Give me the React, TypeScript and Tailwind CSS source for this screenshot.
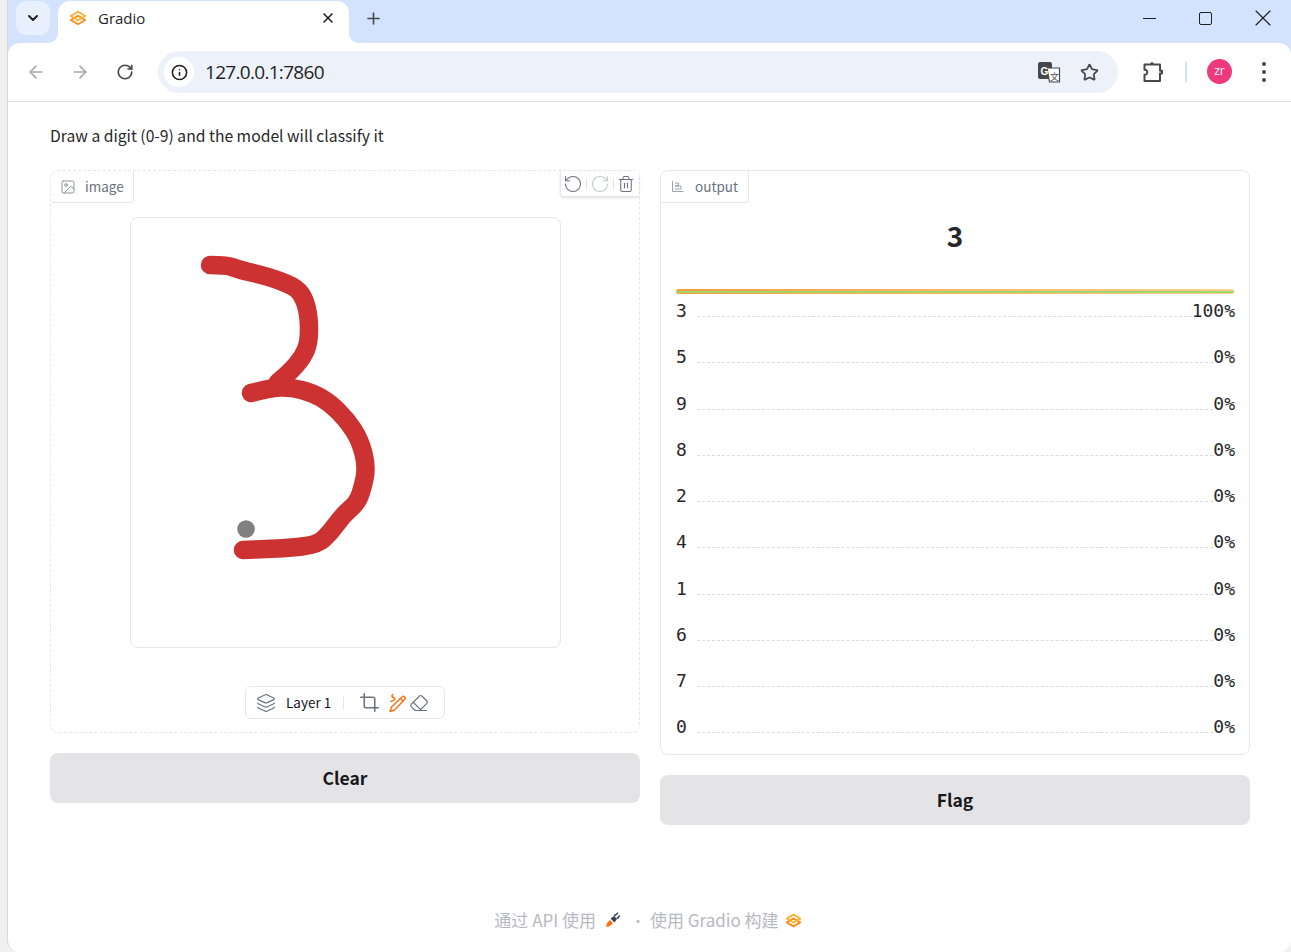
import { ArrowLeft, ArrowRight, ChevronDown, Crop, Eraser, Image, Info, Layers, Plus, RotateCcw, RotateCw, Star, Trash2, X } from "lucide-react";

const sans = "font-['Noto_Sans_CJK_SC','Noto_Sans',sans-serif]";

const scores = [
  { label: "3", value: "100%" },
  { label: "5", value: "0%" },
  { label: "9", value: "0%" },
  { label: "8", value: "0%" },
  { label: "2", value: "0%" },
  { label: "4", value: "0%" },
  { label: "1", value: "0%" },
  { label: "6", value: "0%" },
  { label: "7", value: "0%" },
  { label: "0", value: "0%" },
];

const upperStroke: [number, number][] = [
  [210, 265], [227, 265], [240, 270], [262, 275], [278, 280], [297, 288], [305, 300], [309, 318], [309, 342], [303, 357], [290, 372], [278, 382],
];
const lowerStroke: [number, number][] = [
  [251, 393], [270, 388], [290, 387], [313, 393], [330, 403], [347, 420], [360, 440], [367, 467], [362, 490], [357, 503], [343, 515], [330, 533], [317, 545], [287, 548], [267, 549], [243, 550],
];

// rounds the hand drawn strokes off through the midpoints
function smooth(points: [number, number][]) {
  let d = `M${points[0][0]} ${points[0][1]}`;
  for (let i = 1; i < points.length - 1; i++) {
    const [x, y] = points[i];
    const [nx, ny] = points[i + 1];
    d += ` Q${x} ${y} ${(x + nx) / 2} ${(y + ny) / 2}`;
  }
  const last = points[points.length - 1];
  return `${d} L${last[0]} ${last[1]}`;
}

function GradioLogo({ size = 18 }: { size?: number }) {
  return (
    <svg width={size} height={size} viewBox="0 0 18 18" fill="none" strokeWidth="1.900" strokeLinejoin="round">
      <path d="M1.800 11 9 15.200 16.200 11 9 6.800Z" stroke="#fb8c1e" />
      <path d="M1.800 7 9 2.800 16.200 7 9 11.200Z" stroke="#ffb02e" />
    </svg>
  );
}

function TranslateIcon() {
  return (
    <svg width="24" height="24" viewBox="0 0 24 24">
      <rect x="1" y="2" width="14" height="17" rx="2" fill="#46484b" />
      <path d="M10 8h12.500v14H12.500z" fill="#fff" stroke="#46484b" strokeWidth="1.200" />
      <text x="3.500" y="14.500" fontSize="10" fontWeight="700" fill="#fff" fontFamily="Liberation Sans">G</text>
      <text x="13" y="19.500" fontSize="9" fill="#46484b" fontFamily="Noto Sans CJK SC">文</text>
    </svg>
  );
}

function PuzzleIcon() {
  return (
    <svg width="24" height="24" viewBox="0 0 24 24" fill="none" stroke="#46484b" strokeWidth="2" strokeLinejoin="round">
      <path d="M4.500 4.500h15.500v6.200h2v2.800h-2V21H4.500v-6.200c1.800.2 2.700-1 2.700-2.600S6.300 9.500 4.500 9.700z" />
      <circle cx="12" cy="3.500" r="1.500" fill="#46484b" stroke="none" />
    </svg>
  );
}

function BrushIcon() {
  return (
    <svg width="20" height="20" viewBox="0 0 20 20" fill="none" stroke="#f97316" strokeWidth="1.500" strokeLinecap="round" strokeLinejoin="round">
      <path d="M2 18.500 3.500 14 14.500 3.500c1-1 3.500 1 2.500 2.500L6.500 17z" />
      <path d="M12.500 5.500 15 8" />
      <path d="M3 8.500C7 7 8 5.500 5.500 4.500 4 4 3 3 5 1.500" />
    </svg>
  );
}

function RocketIcon() {
  return (
    <svg width="16" height="16" viewBox="0 0 16 16">
      <path d="M1.500 15c-.5-2 .3-4 1.800-5.300L5 8l3 3-1.700 1.800C5 14.300 3.500 15 1.500 15z" fill="#f97316" />
      <path d="M5.500 6.500 9 4l3 3-2.500 3.500z" fill="#374151" />
      <path d="M9.500 2 11 4 8.800 4.500zM14 6l-2 1.300L11.600 5z" fill="#374151" />
      <path d="M10 3.500 13 .8M12.500 6 15 3.500" stroke="#374151" strokeWidth="1.500" />
    </svg>
  );
}

function TabFlare({ side }: { side: "left" | "right" }) {
  return (
    <svg
      width="10"
      height="10"
      viewBox="0 0 10 10"
      className={side === "left" ? "absolute bottom-0 -left-[10px]" : "absolute bottom-0 -right-[10px] -scale-x-100"}
    >
      <path d="M10 0v10H0c5.500 0 10-4.500 10-10z" fill="#fff" />
    </svg>
  );
}

function BrowserChrome() {
  return (
    <div className="flex flex-col bg-[#d3e3fd]">
      <div className="flex h-[43px] items-start">
        <div className="mt-[1px] ml-[8px] flex h-[34px] w-[34px] items-center justify-center rounded-[10px] bg-[#e9f0fd]">
          <ChevronDown size={16} strokeWidth={3} className="text-[#1f1f1f]" />
        </div>
        <div className="relative z-10 mt-[1px] ml-[8px] flex h-[42px] w-[291px] items-center rounded-t-[12px] bg-white pl-[11px] pr-[13px] pb-[8px]">
          <TabFlare side="left" />
          <TabFlare side="right" />
          <GradioLogo />
          <span className="ml-[11px] flex-1 text-[15px] text-[#1f1f1f] font-['Open_Sans',sans-serif]">Gradio</span>
          <X size={16} strokeWidth={2.500} className="text-[#1f1f1f]" />
        </div>
        <div className="ml-[15px] mt-[9px]">
          <Plus size={19} strokeWidth={2} className="text-[#46484b]" />
        </div>
        <div className="ml-auto flex h-[36px] items-center">
          <div className="h-[1px] w-[13px] bg-[#1f1f1f]" />
          <div className="ml-[43px] h-[13px] w-[13px] rounded-[2px] border border-[#1f1f1f]" />
          <X size={28} strokeWidth={1} className="ml-[37px] mr-[14px] text-[#1f1f1f]" />
        </div>
      </div>
      <div className="flex h-[59px] items-center rounded-t-[12px] border-b border-[#dedede] bg-white">
        <div className="flex w-[150px] items-center pl-[18px]">
          <ArrowLeft size={20} className="text-[#a8a9ab]" />
          <ArrowRight size={20} className="ml-[24px] text-[#a8a9ab]" />
          <RotateCw size={18} strokeWidth={2.200} className="ml-[26px] text-[#46484b]" />
        </div>
        <div className="flex h-[42px] w-[960px] items-center rounded-full bg-[#edf2fa] pl-[6px] pr-[19px]">
          <div className="flex h-[30px] w-[30px] items-center justify-center rounded-full bg-white">
            <Info size={17} strokeWidth={2.200} className="text-[#1f1f1f]" />
          </div>
          <span className="ml-[11px] flex-1 text-[19px] tracking-[-0.7px] text-[#1f1f1f] font-['Open_Sans',sans-serif]">127.0.0.1:7860</span>
          <TranslateIcon />
          <Star size={19} strokeWidth={2.200} className="ml-[19px] text-[#46484b]" />
        </div>
        <div className="ml-[22px]"><PuzzleIcon /></div>
        <div className="ml-[21px] h-[20px] w-[2px] bg-[#d3e3fd]" />
        <div className="ml-[20px] -mt-[2px] flex h-[25px] w-[25px] items-center justify-center rounded-full bg-[#ec3a7c] text-[12px] text-white font-['Open_Sans',sans-serif]">zr</div>
        <div className="ml-[30px] flex flex-col gap-[4px]">
          <div className="h-[4px] w-[4px] rounded-full bg-[#46484b]" />
          <div className="h-[4px] w-[4px] rounded-full bg-[#46484b]" />
          <div className="h-[4px] w-[4px] rounded-full bg-[#46484b]" />
        </div>
      </div>
    </div>
  );
}

function ImagePanel() {
  return (
    <div className="relative flex h-[563px] flex-col rounded-[8px] border border-dashed border-[#e5e7eb]">
      <div className="flex h-[32px] w-[83px] items-center rounded-br-[4px] border-r border-b border-[#e5e7eb] pl-[9px] text-[13.500px] text-[#6b7280]">
        <Image size={16} strokeWidth={1.500} className="text-[#8f939a]" />
        <span className="ml-[9px]">image</span>
      </div>
      <div className="absolute top-0 right-0 flex h-[26px] w-[79px] items-center justify-around rounded-bl-[4px] border-b border-l border-[#e5e7eb] bg-white pr-[2px] shadow-sm">
        <RotateCcw size={20} strokeWidth={1.300} className="text-[#6b7280]" />
        <div className="h-[12px] w-px bg-[#e5e7eb]" />
        <RotateCw size={20} strokeWidth={1.300} className="text-[#c5c8cd]" />
        <div className="h-[12px] w-px bg-[#e5e7eb]" />
        <Trash2 size={18} strokeWidth={1.400} className="text-[#6b7280]" />
      </div>
      <div className="mt-[14px] ml-[79px] h-[431px] w-[431px] rounded-[8px] border border-[#e5e7eb] bg-white">
        <svg width="429" height="429" viewBox="131 218 429 429" fill="none" stroke="#cc3232" strokeWidth="18.500" strokeLinecap="round" strokeLinejoin="round">
          <path d={smooth(upperStroke)} />
          <path d={smooth(lowerStroke)} />
          <circle cx="246" cy="529" r="8.800" fill="#808080" stroke="none" />
        </svg>
      </div>
      <div className="mt-[38px] flex justify-center">
        <div className="flex h-[33px] w-[200px] items-center rounded-[6px] border border-[#e5e7eb] pl-[10px]">
          <Layers size={20} strokeWidth={1.400} className="text-[#6b7280]" />
          <span className="ml-[10px] text-[13.500px] text-[#111827]">Layer 1</span>
          <div className="ml-[12px] h-[14px] w-px bg-[#e5e7eb]" />
          <Crop size={21} strokeWidth={1.800} className="ml-[15px] text-[#6b7280]" />
          <div className="ml-[8px]"><BrushIcon /></div>
          <Eraser size={20} strokeWidth={1.400} className="ml-[1px] text-[#6b7280]" />
        </div>
      </div>
    </div>
  );
}

function OutputPanel() {
  return (
    <div className="flex h-[585px] flex-col rounded-[8px] border border-[#e5e7eb]">
      <div className="flex h-[32px] w-[88px] shrink-0 items-center rounded-br-[4px] border-r border-b border-[#e5e7eb] pl-[10px] text-[13.500px] text-[#6b7280]">
        <svg width="13" height="13" viewBox="0 0 13 13" fill="none" stroke="#9ca3af" strokeWidth="1">
          <path d="M1.500 1v10.500H12.500M4 3H7.500V6H4M4 6H10V9H4" />
        </svg>
        <span className="ml-[11px]">output</span>
      </div>
      <div className="mt-[13px] text-center text-[28px] leading-[38px] font-semibold text-[#27272a]">3</div>
      <div className="mt-[35px] mx-[15px] h-[5px] shrink-0 overflow-hidden rounded-full bg-gradient-to-r from-[#f79b3e] to-[#fbd38d] pt-[2px]">
        <div className="h-[2px] bg-[#a5d46a]" />
      </div>
      <div className="mt-[5px] flex flex-col pr-[14px] pl-[15px] font-['DejaVu_Sans_Mono',monospace] text-[18px] text-[#27272a]">
        {scores.map((s) => (
          <div key={s.label} className="flex h-[46.250px] items-start leading-[24px] last:h-[38px]">
            <span className="w-[21px]">{s.label}</span>
            <div className="mt-[17px] flex-1 border-b border-dashed border-[#dcdcdf]" />
            <span>{s.value}</span>
          </div>
        ))}
      </div>
    </div>
  );
}

export default function App() {
  return (
    <div className={`flex h-[952px] w-[1291px] flex-col overflow-hidden bg-[#f0f0f0] ${sans}`}>
      <div className="ml-[7px] flex flex-1 flex-col overflow-hidden rounded-b-[12px] border-l border-[#d8d8d8] bg-white">
        <BrowserChrome />
        <div className="flex flex-1 flex-col pr-[41px] pl-[42px]">
          <p className="mt-[22px] text-[15.700px] leading-[24px] text-[#27272a]">Draw a digit (0-9) and the model will classify it</p>
          <div className="mt-[22px] grid grid-cols-2 items-start gap-[20px]">
            <div className="flex flex-col gap-[20px]">
              <ImagePanel />
              <button className="h-[50px] rounded-[8px] bg-[#e4e4e7] text-[17.500px] font-semibold text-[#18181b]">Clear</button>
            </div>
            <div className="flex flex-col gap-[20px]">
              <OutputPanel />
              <button className="h-[50px] rounded-[8px] bg-[#e4e4e7] text-[17.500px] font-semibold text-[#18181b]">Flag</button>
            </div>
          </div>
          <div className="mt-[83px] flex items-center justify-center pr-[4px] text-[17px] leading-[24px] text-[#b6b9bf]">
            <span>通过 API 使用</span>
            <span className="ml-[9px]"><RocketIcon /></span>
            <span className="ml-[10px] text-[14px]">·</span>
            <span className="ml-[5px]">使用 Gradio 构建</span>
            <span className="ml-[6px]"><GradioLogo size={17} /></span>
          </div>
        </div>
      </div>
    </div>
  );
}
